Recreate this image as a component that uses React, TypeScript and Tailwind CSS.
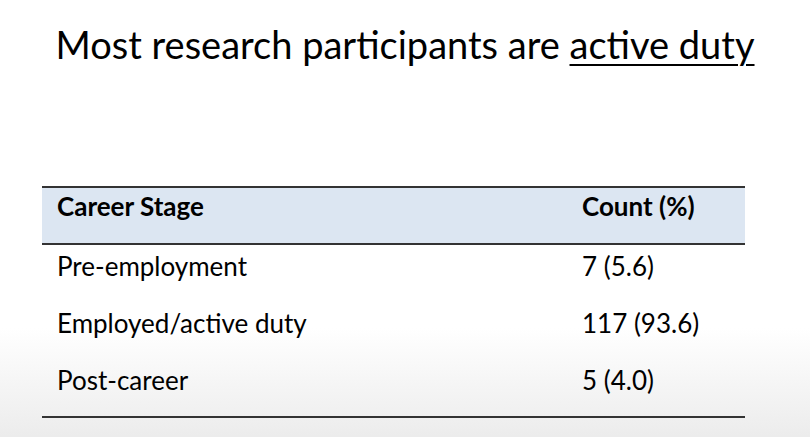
const rows = [
  { stage: "Pre-employment", count: "7 (5.6)" },
  { stage: "Employed/active duty", count: "117 (93.6)" },
  { stage: "Post-career", count: "5 (4.0)" },
]

export default function App() {
  return (
    <div
      className="w-[810px] h-[437px] overflow-hidden bg-gradient-to-b from-white from-75% to-[#ececec] text-black"
      style={{ fontFamily: "Lato, 'Open Sans', sans-serif" }}
    >
      <h1 className="pt-[18px] text-center text-[38px] leading-[52px]">
        Most research participants are <span className="underline decoration-2 underline-offset-[5px]">active duty</span>
      </h1>
      <div className="mt-[116px] mx-[42px] w-[703px]">
        <div className="flex h-[59px] border-y-2 border-[#333] bg-[#dce6f2] pl-[15px] pt-[2px] text-[26px] leading-[32px] font-bold">
          <div className="w-[525px]">Career Stage</div>
          <div>Count (%)</div>
        </div>
        <div className="border-b-2 border-[#333]">
          {rows.map((r) => (
            <div key={r.stage} className="flex h-[57px] pt-[5px] pl-[15px] text-[26px] leading-[32px]">
              <div className="w-[525px]">{r.stage}</div>
              <div>{r.count}</div>
            </div>
          ))}
        </div>
      </div>
    </div>
  )
}
